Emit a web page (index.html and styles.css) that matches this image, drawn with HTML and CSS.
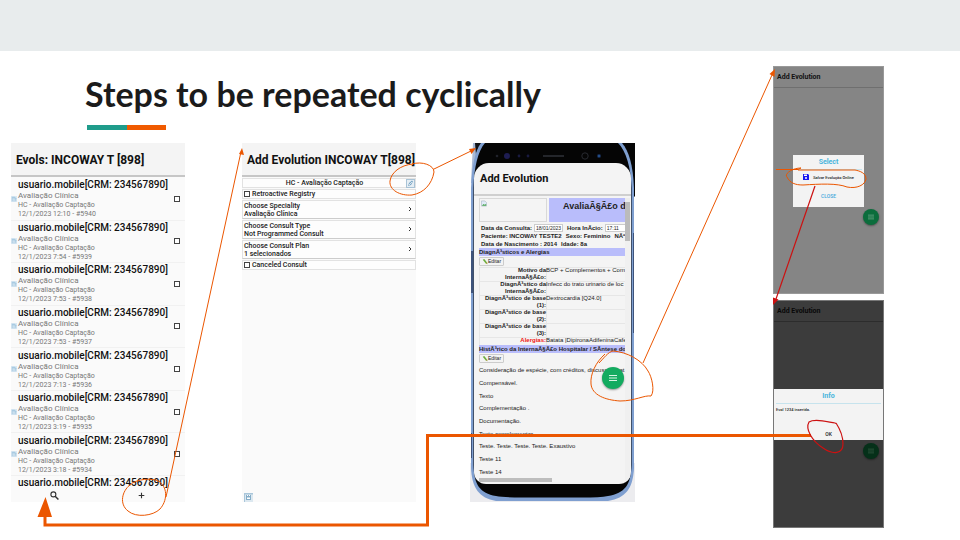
FILE: index.html
```
<!DOCTYPE html>
<html lang="en">
<head>
<meta charset="utf-8">
<title>Steps to be repeated cyclically</title>
<link rel="stylesheet" href="styles.css">
</head>
<body>
<svg class="defs" aria-hidden="true">
  <symbol id="doc" viewBox="0 0 8 8"><rect width="8" height="8" fill="#dbe9f3"/><path d="M1 1h4l2 2v4H1z" fill="#a9cbe2"/><path d="M2 4h3M2 5.500h4" stroke="#fff" stroke-width=".7"/></symbol>
  <symbol id="pencil" viewBox="0 0 8 8"><path d="M1 1l2-1 4 5 0 2-2-1z" fill="#6cae3e"/><path d="M5 5l2 0 0 2z" fill="#d9a25c"/></symbol>
  <symbol id="menu" viewBox="0 0 8 8"><path d="M0 1.500h8M0 4h8M0 6.500h8" stroke="currentColor" stroke-width="1.200"/></symbol>
</svg>
<main class="slide">
  <div class="band"></div>
  <div class="board">
    <header class="heading">
      <h1>Steps to be repeated cyclically</h1>
      <div class="rule"></div>
    </header>

    <section class="screen evols">
      <h2 class="bar">Evols: INCOWAY T [898]</h2>
      <ul class="list">
        <li><svg class="doc"><use href="#doc"/></svg><label for="e0"><b>usuario.mobile[CRM: 234567890]</b><span class="kind">Avaliação Clínica</span><span>HC - Avaliação Captação</span><span>12/1/2023 12:10 - #5940</span></label><input type="checkbox" id="e0"></li>
        <li><svg class="doc"><use href="#doc"/></svg><label for="e1"><b>usuario.mobile[CRM: 234567890]</b><span class="kind">Avaliação Clínica</span><span>HC - Avaliação Captação</span><span>12/1/2023 7:54 - #5939</span></label><input type="checkbox" id="e1"></li>
        <li><svg class="doc"><use href="#doc"/></svg><label for="e2"><b>usuario.mobile[CRM: 234567890]</b><span class="kind">Avaliação Clínica</span><span>HC - Avaliação Captação</span><span>12/1/2023 7:53 - #5938</span></label><input type="checkbox" id="e2"></li>
        <li><svg class="doc"><use href="#doc"/></svg><label for="e3"><b>usuario.mobile[CRM: 234567890]</b><span class="kind">Avaliação Clínica</span><span>HC - Avaliação Captação</span><span>12/1/2023 7:53 - #5937</span></label><input type="checkbox" id="e3"></li>
        <li><svg class="doc"><use href="#doc"/></svg><label for="e4"><b>usuario.mobile[CRM: 234567890]</b><span class="kind">Avaliação Clínica</span><span>HC - Avaliação Captação</span><span>12/1/2023 7:13 - #5936</span></label><input type="checkbox" id="e4"></li>
        <li><svg class="doc"><use href="#doc"/></svg><label for="e5"><b>usuario.mobile[CRM: 234567890]</b><span class="kind">Avaliação Clínica</span><span>HC - Avaliação Captação</span><span>12/1/2023 3:19 - #5935</span></label><input type="checkbox" id="e5"></li>
        <li><svg class="doc"><use href="#doc"/></svg><label for="e6"><b>usuario.mobile[CRM: 234567890]</b><span class="kind">Avaliação Clínica</span><span>HC - Avaliação Captação</span><span>12/1/2023 3:18 - #5934</span></label><input type="checkbox" id="e6"></li>
        <li class="partial"><b>usuario.mobile[CRM: 234567890]</b></li>
      </ul>
      <footer class="tools">
        <button type="button" aria-label="Search"><svg viewBox="0 0 8 8"><circle cx="3" cy="3" r="2.200" fill="none" stroke="#333"/><path d="M4.600 4.600L7.500 7.500" stroke="#333" stroke-width="1.300"/></svg></button>
        <button type="button" aria-label="Add"><svg viewBox="0 0 8 8"><path d="M4 1.500v5M1.500 4h5" stroke="#333" stroke-width="1"/></svg></button>
      </footer>
    </section>

    <section class="screen form">
      <h2 class="bar">Add Evolution INCOWAY T[898]</h2>
      <div class="row template"><span>HC - Avaliação Captação</span><button type="button" aria-label="Edit"><svg viewBox="0 0 9 9"><rect x=".5" y=".5" width="8" height="8" fill="#e6eef4" stroke="#a9c3d6"/><path d="M2 7l1-3 3-2.500 1 1L5 6z" fill="#7ba7c6"/><path d="M3 6l3-3" stroke="#fff" stroke-width=".7"/></svg></button></div>
      <label class="row tick"><input type="checkbox">Retroactive Registry</label>
      <div class="row pick"><label for="s1">Choose Speciality</label><select id="s1"><option>Avaliação Clínica</option></select><svg class="chev" viewBox="0 0 4 6"><path d="M1 1l2 2-2 2" fill="none" stroke="#333"/></svg></div>
      <div class="row pick"><label for="s2">Choose Consult Type</label><select id="s2"><option>Not Programmed Consult</option></select><svg class="chev" viewBox="0 0 4 6"><path d="M1 1l2 2-2 2" fill="none" stroke="#333"/></svg></div>
      <div class="row pick"><label for="s3">Choose Consult Plan</label><select id="s3"><option>1 selecionados</option></select><svg class="chev" viewBox="0 0 4 6"><path d="M1 1l2 2-2 2" fill="none" stroke="#333"/></svg></div>
      <label class="row tick"><input type="checkbox">Canceled Consult</label>
      <button class="save" type="button" aria-label="Save"><svg viewBox="0 0 9 9"><rect width="9" height="9" fill="#dce8f0"/><path d="M0 0h9v1.500H1V9H0z" fill="#a9c6da"/><path d="M2 2h5v5H2z" fill="#85adc8"/><path d="M3 2h1v1H3zM5 2h1v1H5zM3 4.500h3V6H3z" fill="#fff"/></svg></button>
    </section>

    <section class="phone">
      <svg class="shell" viewBox="0 0 165 359" preserveAspectRatio="none" aria-hidden="true">
        <path d="M0 320H165V359H0z" fill="#ececef"/>
        <path d="M120 0H165V54L150 40z" fill="#050505"/>
        <path d="M3 0H22L3 40H1z" fill="#a9bad6"/>
        <path d="M5 0H12Q8 4 6 12z" fill="#101216"/>
        <path d="M1 325V45C2 22 5 8 11 0H152C159 8 163 22 164 45V325C163 345 156 355 138 358H26C9 355 2 345 1 325z" fill="#7f9fd0"/>
        <path d="M1 108h2v42H1zM1 290h1v25H1zM163 90h1v100h-1z" fill="#3e547c"/>
        <path d="M3.500 322V45C4 24 8 8 15 0H148C156 8 161 24 161.500 45V322C161 342 155 350 138 353Q130 354.500 112 354.500H52Q34 354.500 26 353C10 350 4 342 3.500 322z" fill="#050505"/>
        <g fill="none"><circle cx="37" cy="13" r="3" fill="#1e1d52"/><circle cx="27" cy="13" r="1.300" fill="#20222b"/><circle cx="49" cy="13" r="1.400" fill="#191a40"/><circle cx="58" cy="13" r="1.400" fill="#191a40"/><path d="M73 13h21" stroke="#24262b" stroke-width="2"/><circle cx="115" cy="13" r="3.200" stroke="#282a30"/><circle cx="129" cy="13" r="2" fill="#172c50"/><circle cx="129" cy="13" r="1" fill="#29599b"/></g>
      </svg>
      <div class="glass">
        <h2>Add Evolution</h2>
        <div class="page">
          <div class="record">
            <div class="banner"><div class="photo"><svg viewBox="0 0 7 7"><path d="M.5.5h4l2 2v4h-6z" fill="#e1ebf8" stroke="#9aa9b8" stroke-width=".6"/><path d="M1 6l2-2 1 1 2-1v2z" fill="#4ba650"/></svg></div><h3>AvaliaÃ§Ã£o d</h3></div>
            <div class="facts">
              <p><label for="dt">Data da Consulta:</label><input id="dt" class="date" value="18/01/2023"><label for="hr">Hora InÃ­cio:</label><input id="hr" class="time" value="17:11"></p>
              <p><span>Paciente: INCOWAY TESTE2</span><span>Sexo: Feminino</span><span>NÃº</span></p>
              <p><span>Data de Nascimento : 2014</span><span>Idade: 8a</span></p>
            </div>
            <h4>DiagnÃ³sticos e Alergias</h4>
            <button class="edit" type="button"><svg><use href="#pencil"/></svg>Editar</button>
            <table>
              <tr><th scope="row">Motivo da InternaÃ§Ã£o:</th><td>BCP + Complementos + Com</td></tr>
              <tr><th scope="row">DiagnÃ³stico da InternaÃ§Ã£o:</th><td>Infecc do trato urinario de loc</td></tr>
              <tr><th scope="row">DiagnÃ³stico de base (1):</th><td>Dextrocardia [Q24.0]</td></tr>
              <tr><th scope="row">DiagnÃ³stico de base (2):</th><td></td></tr>
              <tr><th scope="row">DiagnÃ³stico de base (3):</th><td></td></tr>
              <tr class="alert"><th scope="row">Alergias:</th><td>Batata |DipironaAdifeninaCafe</td></tr>
            </table>
            <h4>HistÃ³rico da InternaÃ§Ã£o Hospitalar / SÃ­ntese do</h4>
            <button class="edit" type="button"><svg><use href="#pencil"/></svg>Editar</button>
            <div class="notes"><p>Consideração de espécie, com créditos, discussão trat</p><p>Compensável.</p><p>Texto</p><p>Complementação .</p><p>Documentação.</p><p>Texto complementar.</p><p>Teste. Teste. Teste. Teste. Exaustivo</p><p>Teste 11</p><p>Teste 14</p></div>
            <div class="hscroll"></div>
          </div>
          <div class="vscroll"></div>
        </div>
        <button class="fab big" type="button" aria-label="Menu"><svg><use href="#menu"/></svg></button>
      </div>
    </section>

    <div class="stack">
      <section class="mini dim">
        <h2>Add Evolution</h2>
        <div class="stage">
          <div class="dialog select">
            <h3>Select</h3>
            <button class="option" type="button"><svg viewBox="0 0 6 6"><path d="M0 0h5l1 1v5H0z" fill="#1818f0"/><path d="M1 .5h3v1.500H1z" fill="#fff"/><circle cx="3" cy="4" r="1" fill="#fff"/></svg>Salvar Evolução Online</button>
            <button class="close" type="button">CLOSE</button>
          </div>
        </div>
        <button class="fab" type="button" aria-label="Menu"><svg><use href="#menu"/></svg></button>
      </section>
      <section class="mini dark">
        <h2>Add Evolution</h2>
        <div class="stage">
          <div class="dialog info">
            <h3>Info</h3>
            <p>Evol 1234 inserida.</p>
            <button class="ok" type="button">OK</button>
          </div>
        </div>
        <button class="fab" type="button" aria-label="Menu"><svg><use href="#menu"/></svg></button>
      </section>
    </div>
  </div>

  <svg class="marks" viewBox="0 0 960 540" preserveAspectRatio="none" aria-hidden="true">
    <g fill="none" stroke="#eb5600">
      <path d="M811 435.500H427.500V525H45V515" stroke-width="3"/>
      <path d="M130 485C136 479 153 477 160 482C168 489 167 501 160 509C153 516 136 518 128 511C119 504 122 491 130 485M166 497L240.500 154"/>
      <path d="M412 164C422 161 434 165 434 172C432 184 424 193 412 195C400 196 389 190 390 181C391 173 400 165 413 164M433 169.500L471 151"/>
      <path d="M605 354C596 362 590 374 591 384C592 395 605 400 620 401C635 401 644 395 651 396C655 391 652 377 648 371C642 360 627 352 613 351C608 352 604 358 599 363M643 363L772 75"/>
      <path d="M776 169.500H798L801 168C792 168 784 174 787 177C790 183 795 185 803 185C820 184 837 183 847 187C857 189 865 185 866 179C866 173 860 171 855 170H798"/>
    </g>
    <path d="M45.500 497L37.500 517H52zM242 148L239 154L244 155zM476 148L469 149L471.500 154zM775 69L769.500 74L774.500 77z" fill="#eb5600"/>
    <g fill="none" stroke="#cc1111"><path d="M815 186L776 299" stroke-width="1.200"/><path d="M837 424L835 423C828 422 815 418 809 422C805 429 812 441 823 448C833 455 843 454 843 444C843 435 840 429 836 423" stroke-width="1.200"/></g>
    <path d="M773 305V297.500L778.500 299.500z" fill="#cc1111"/>
  </svg>
</main>
</body>
</html>
```
FILE: styles.css
```
* { box-sizing: border-box; }
body { margin: 0; background: #fff; font-family: Roboto, sans-serif; color: #222; }
h1, h2, h3, h4, p, ul { margin: 0; padding: 0; }
button, input, select { font: inherit; color: inherit; margin: 0; padding: 0; border: 0; background: none; }
button svg { display: block; width: 100%; height: 100%; }
.defs { position: absolute; width: 0; height: 0; }

.slide { position: relative; display: flex; flex-direction: column; min-height: 100vh; overflow: hidden; }
.band { height: 51px; background: #e8eced; }
.board {
  flex: 1;
  display: grid;
  grid-template-columns: 174fr 57fr 174fr 54fr 165fr 138fr 111fr;
  grid-template-rows: 77px 1fr 26px;
  padding: 15px 76px 12px 11px;
}
.heading { grid-area: 1 / 1 / 2 / 6; padding: 8px 0 0 74px; }
h1 { font: 700 34px/40px Lato, sans-serif; color: #1b1b1b; }
.rule { width: 79px; height: 5px; margin: 11px 0 0 2px; background: linear-gradient(90deg, #1f9c8b 51%, #f05a00 51%); }

.screen { grid-row: 2; display: flex; flex-direction: column; min-width: 0; background: #fafafa; }
.evols { grid-column: 1; }
.form { grid-column: 3; }
.bar { height: 34px; padding: 0 5px; border-bottom: 2px solid #c6c6c6; background: #f4f4f4; font-size: 12px; line-height: 34px; font-weight: 700; color: #111; white-space: nowrap; }

.list { flex: 1; display: grid; grid-template-rows: repeat(7, 1fr) 13px; padding-top: 1px; list-style: none; }
.list li { display: flex; align-items: center; padding-right: 5px; border-bottom: 1px solid #f1f1f1; white-space: nowrap; }
.list label { flex: 1; font-size: 7px; line-height: 9px; color: #777; }
.list label span, .list b { display: block; }
.list b { font-size: 10px; line-height: 13px; font-weight: 500; color: #111; }
.list .kind { font-size: 8px; line-height: 10px; }
.list .partial { padding-left: 7px; border: 0; }
.doc { width: 6px; height: 8px; margin-right: 1px; }
input[type=checkbox] { appearance: none; flex: none; width: 6px; height: 6px; border: 1px solid #444; background: #fff; }
.tools { display: flex; height: 13px; }
.tools button { flex: 1; display: flex; justify-content: center; }
.tools svg { width: 9px; height: 9px; margin-top: 2px; }

.row { display: flex; border: 1px solid #e2e2e2; background: #fdfdfd; font-size: 7px; line-height: 8px; font-weight: 500; color: #222; margin-bottom: 1px; }
.template { margin-top: 1px; height: 10px; align-items: center; justify-content: center; }
.template span { flex: 1; text-align: center; }
.template button { width: 9px; height: 9px; }
.tick { height: 10px; align-items: center; gap: 2px; padding-left: 1px; }
.pick { position: relative; flex-direction: column; padding: 1px 1px 0; height: 19px; border-bottom-color: #ccc; }
.pick select { appearance: none; height: 8px; line-height: 8px; }
.chev { position: absolute; right: 3px; top: 5px; width: 4px; height: 6px; }
.save { width: 9px; height: 9px; margin: auto 0 0 2px; }

.phone { grid-area: 2 / 5; position: relative; display: flex; padding: 20px 4px 18px; min-width: 0; }
.shell { position: absolute; inset: 0; width: 100%; height: 100%; }
.glass { position: relative; flex: 1; min-width: 0; display: flex; flex-direction: column; background: #f4f4f4; border-radius: 15px 15px 12px 12px; overflow: hidden; }
.glass h2 { padding-left: 6px; font-size: 11px; line-height: 31px; color: #111; border-bottom: 2px solid #cfcfcf; }
.page { flex: 1; display: flex; padding: 2px 1px 0 5px; }
.record { flex: 1; min-width: 0; display: flex; flex-direction: column; font: 6px/8px "Liberation Sans", sans-serif; white-space: nowrap; }
.vscroll { width: 5px; background: linear-gradient(#ececec 4px, #bbb 4px, #bbb 43px, #f0f0f0 43px); }
.banner { display: flex; gap: 2px; height: 24px; }
.photo { flex: 0 0 68px; border: 1px solid #d8d8d8; padding: 1px; }
.photo svg { display: block; width: 6px; height: 7px; }
.banner h3 { flex: 1; min-width: 0; padding-left: 14px; background: #b9bdfb; font-size: 9px; line-height: 16px; }
.facts { padding: 2px 0 0 2px; font-weight: 700; }
.facts p { display: flex; gap: 4px; }
.facts input { height: 8px; padding-left: 1px; margin-left: -2px; border: 1px solid #ccc; background: #fff; font-size: 5px; line-height: 6px; font-weight: 400; }
.date { width: 29px; }
.time { width: 21px; }
h4 { background: #b9bdfb; font-size: 6px; line-height: 8px; }
.edit { align-self: flex-start; display: flex; align-items: center; width: 25px; height: 9px; padding-left: 2px; margin: 1px 0; border: 1px solid #ccc; border-radius: 1px; background: #f3f3f3; font-size: 5px; line-height: 7px; }
.edit svg { width: 6px; height: 6px; }
table { table-layout: fixed; width: 100%; border-collapse: collapse; line-height: 7px; }
th, td { padding: 0; box-shadow: inset 1px 1px #e6e6e6; vertical-align: top; text-align: left; }
th { width: 67px; white-space: normal; text-align: right; }
tr { height: 14px; }
.alert { height: 8px; }
.alert th { color: #f01414; }
.notes { flex: 1; display: grid; grid-template-rows: repeat(9, 1fr); align-items: center; }
.hscroll { width: 50%; height: 4px; margin-bottom: 2px; background: #bdbdbd; }

.fab { position: absolute; right: 4px; top: 142px; width: 16px; height: 16px; padding: 5px; border-radius: 50%; box-shadow: 0 1px 2px #0006; }
.fab.big { right: 7px; top: 204px; width: 22px; height: 22px; padding: 7px; background: #13ab60; color: #d9f5e5; }

.stack { grid-area: 1 / 7 / 4 / 8; display: flex; flex-direction: column; gap: 6px; }
.mini { position: relative; flex: 1; display: flex; flex-direction: column; border: 1px solid #999; }
.mini h2 { padding-left: 3px; font-size: 7px; line-height: 20px; color: #111; border-bottom: 1px solid #6f6f6f; }
.stage { flex: 1; display: flex; align-items: center; justify-content: center; padding-bottom: 20px; }
.dim { background: #858585; }
.dark { background: #3c3c3c; border-color: #777; }
.dark h2 { color: #080808; border-color: #2c2c2c; }
.dim .fab { background: #0b6d3c; color: #5f9f7d; }
.dark .fab { background: #053019; color: #2c543d; }
.dialog { display: flex; flex-direction: column; background: #f3f3f3; text-align: center; }
.dialog h3 { font-size: 7px; line-height: 14px; color: #48b5dc; border-bottom: 1px solid #c6e3ed; }
.select { width: 66%; height: 52px; padding: 0 2px; }
.option { align-self: center; display: flex; align-items: center; justify-content: center; gap: 4px; height: 11px; margin-top: 2px; font-size: 4px; font-weight: 500; white-space: nowrap; }
.option svg { width: 6px; height: 6px; }
.close { margin-top: 7px; font-size: 5px; line-height: 12px; font-weight: 500; color: #48a9dc; }
.info { width: 100%; height: 51px; padding: 0 2px; }
.info p { text-align: left; font-size: 4px; line-height: 12px; font-weight: 500; }
.ok { margin-top: auto; font-size: 5px; line-height: 12px; font-weight: 500; }

.marks { position: absolute; inset: 0; width: 100%; height: 100%; pointer-events: none; }
```
